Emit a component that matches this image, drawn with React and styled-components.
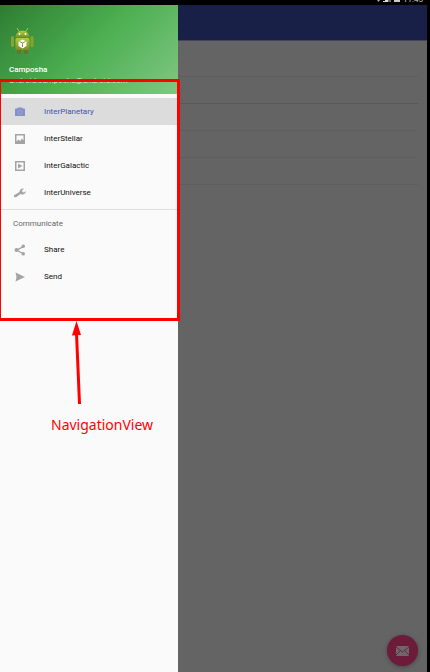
import React from "react";
import styled, { createGlobalStyle } from "styled-components";

const GlobalStyle = createGlobalStyle`
  * { box-sizing: border-box; }
  html, body, #root { height: 100%; margin: 0; }
  body { background: #000; font-family: Roboto, "Liberation Sans", sans-serif; }
`;

const Device = styled.div`
  position: relative;
  display: flex;
  flex-direction: column;
  min-height: 100vh;
  overflow: hidden;
  background: #000;
`;

const StatusBar = styled.header`
  height: 5px;
  flex: none;
  display: flex;
  justify-content: flex-end;
  gap: 3px;
  padding-right: 7px;
  overflow: hidden;
  color: #d0d0d0;
`;

const StatusIcons = styled.svg`
  width: 24px;
  height: 3px;
  flex: none;
`;

const Clock = styled.time`
  height: 3px;
  display: flex;
  align-items: flex-end;
  font-size: 8px;
  line-height: 7px;
`;

const Screen = styled.div`
  position: relative;
  flex: 1;
  display: flex;
  flex-direction: column;
  margin-right: 3px;
  background: #646464;
`;

const AppBar = styled.div`
  height: 36px;
  flex: none;
  background: #192048;
  border-bottom: 1px solid #42455a;
`;

const List = styled.ul`
  list-style: none;
  margin: 0 9px 0 0;
  padding: 9px 0 0;
`;

const ListRow = styled.li`
  height: 27px;
  border-bottom: 1px solid ${(p) => (p.$strong ? "#585858" : "#5e5e5e")};
`;

const Fab = styled.button`
  position: absolute;
  right: 9px;
  bottom: 6px;
  width: 31px;
  height: 31px;
  padding: 0;
  border: 0;
  border-radius: 50%;
  display: grid;
  place-items: center;
  background: #6c1b39;
  box-shadow: 0 1px 4px rgba(0, 0, 0, 0.3);
`;

const Drawer = styled.aside`
  position: absolute;
  top: 0;
  bottom: 0;
  left: 0;
  width: 178px;
  background: #fafafa;
`;

const Profile = styled.div`
  height: 89px;
  display: flex;
  flex-direction: column;
  padding: 22px 9px 0;
  color: #fff;
  background: linear-gradient(135deg, #2e7d32, #4caf50 50%, #81c784);
`;

const Avatar = styled.svg`
  width: 26px;
  height: 30px;
  margin-bottom: 7px;
`;

const Name = styled.div`
  font-size: 8px;
  line-height: 11px;
  font-weight: 500;
`;

const Email = styled.div`
  font-size: 8px;
  line-height: 11px;
  color: #d9eed9;
`;

const Menu = styled.nav`
  display: flex;
  flex-direction: column;
  padding-top: 4px;
`;

const MenuLink = styled.a`
  height: 27px;
  display: flex;
  align-items: center;
  gap: 18px;
  padding-left: 14px;
  font-size: 8px;
  font-weight: 400;
  text-decoration: none;
  color: ${(p) => (p.$active ? "#3f51b5" : "#111")};
  background: ${(p) => (p.$active ? "#dcdcdc" : "transparent")};
`;

const Glyph = styled.svg`
  width: 12px;
  height: 12px;
  flex: none;
  fill: ${(p) => (p.$active ? "#858fcb" : "#a4a4a4")};
`;

const Divider = styled.hr`
  width: 100%;
  height: 1px;
  margin: 3px 0 0;
  border: 0;
  background: #e0e0e0;
`;

const Subheader = styled.h2`
  height: 26px;
  margin: 0;
  padding-left: 13px;
  font-size: 8px;
  line-height: 27px;
  font-weight: 400;
  color: #666;
`;

const Highlight = styled.div`
  position: absolute;
  top: 74px;
  left: 0;
  width: 180px;
  height: 242px;
  border: 3px solid #f00;
  border-left-width: 1px;
  pointer-events: none;
`;

const Callout = styled.figure`
  position: absolute;
  top: 316px;
  left: 51px;
  margin: 0;
`;

const Arrow = styled.svg`
  display: block;
  width: 60px;
  height: 84px;
`;

const CalloutLabel = styled.figcaption`
  margin-top: 10px;
  font-family: "Noto Sans", "Open Sans", sans-serif;
  font-size: 14px;
  line-height: 20px;
  color: #f00;
`;

const glyphs = {
  camera: (
    <>
      <path d="M8 3 6.500 5H3q-1 0-1 1v13q0 1 1 1h18q1 0 1-1V6q0-1-1-1h-3.500L16 3z" />
      <circle cx="12" cy="12.500" r="4" fill="none" stroke="#a3aad0" strokeWidth="1.500" />
    </>
  ),
  image: (
    <path fillRule="evenodd" d="M2 2h20v20H2zM5 5v12l4-4 3 3 4-5 3 4V5z" />
  ),
  slideshow: (
    <path fillRule="evenodd" d="M2 2h20v20H2zM5 5v14h14V5zM8 7l9 5-9 5z" />
  ),
  wrench: (
    <path d="M1 16 11 10c0-5 4-8 9-7l-4 4 1 3 3 1 4-3c0 5-5 8-9 7l-2-1-8 6c-4 2-7-1-4-4z" />
  ),
  share: (
    <>
      <path d="m5 11 13-7 1 2.500-11 6 11 5.500-1 2.500-13-7z" />
      <circle cx="5" cy="12" r="4" />
      <circle cx="18.500" cy="4.500" r="3.500" />
      <circle cx="18.500" cy="19.500" r="3.500" />
    </>
  ),
  send: <path d="m3 3 19 9-19 9 2-9z" />,
};

const places = [
  { icon: "camera", label: "InterPlanetary", active: true },
  { icon: "image", label: "InterStellar" },
  { icon: "slideshow", label: "InterGalactic" },
  { icon: "wrench", label: "InterUniverse" },
];

const actions = [
  { icon: "share", label: "Share" },
  { icon: "send", label: "Send" },
];

function MenuItem({ icon, label, active }) {
  return (
    <MenuLink href="#" $active={active} aria-current={active ? "page" : undefined}>
      <Glyph viewBox="0 0 24 24" $active={active} aria-hidden="true">
        {glyphs[icon]}
      </Glyph>
      {label}
    </MenuLink>
  );
}

function Robot() {
  return (
    <Avatar viewBox="0 0 26 30" aria-hidden="true">
      <defs>
        <linearGradient id="shell" x1="0" y1="0" x2="0" y2="1">
          <stop offset="0" stopColor="#b4cd36" />
          <stop offset="1" stopColor="#788f24" />
        </linearGradient>
      </defs>
      <path d="m8 1 2.500 4M19 1l-2.500 4" stroke="#a5c547" strokeWidth="1" />
      <path d="M6.500 10.500c0-9 14-9 14 0z" fill="url(#shell)" />
      <circle cx="10.500" cy="7" r="1" fill="#fff" />
      <circle cx="16.500" cy="7" r="1" fill="#fff" />
      <rect x="2" y="9" width="3" height="11" rx="1.500" fill="#8aa32c" />
      <rect x="21.500" y="9" width="3" height="11" rx="1.500" fill="#8aa32c" />
      <rect x="8" y="21" width="4" height="6" rx="1.500" fill="#66752b" />
      <rect x="15" y="21" width="4" height="6" rx="1.500" fill="#66752b" />
      <rect x="6.500" y="11" width="14" height="12" rx="1.500" fill="url(#shell)" />
      <path d="m13.500 12.500 4 2v4.500l-4 2.500-4-2.500v-4.500z" fill="#fff" />
      <path d="m10.500 14.500 3 1.500 3-1.500M13.500 16v4" fill="none" stroke="#819a3b" strokeWidth="1" />
    </Avatar>
  );
}

export default function App() {
  return (
    <>
      <GlobalStyle />
      <Device>
        <StatusBar>
          <StatusIcons viewBox="0 0 24 3" aria-hidden="true">
            <path d="M1 0h3L2.500 2z" fill="#aaa" />
            <path d="M7 1h2V0h3v2H7z" fill="#ddd" />
            <path d="M12 0h3v2h-3z" fill="#666" />
            <path d="M18 0h6v2h-6z" fill="#ccc" />
          </StatusIcons>
          <Clock>11:45</Clock>
        </StatusBar>
        <Screen>
          <AppBar />
          <List>
            <ListRow />
            <ListRow $strong />
            <ListRow />
            <ListRow />
            <ListRow />
          </List>
          <Fab aria-label="Compose mail">
            <svg width="13" height="10" viewBox="0 0 13 10" aria-hidden="true">
              <rect width="13" height="10" rx="1" fill="#6c686a" />
              <path
                d="m0 1 6.500 5L13 1M0 9l4.500-4.500M13 9 8.500 4.500"
                fill="none"
                stroke="#6c2541"
                strokeWidth="1"
              />
            </svg>
          </Fab>
          <Drawer>
            <Profile>
              <Robot />
              <Name>Camposha</Name>
              <Email>android.camposha@android.com</Email>
            </Profile>
            <Menu aria-label="Main">
              {places.map((item) => (
                <MenuItem key={item.label} {...item} />
              ))}
              <Divider />
              <Subheader>Communicate</Subheader>
              {actions.map((item) => (
                <MenuItem key={item.label} {...item} />
              ))}
            </Menu>
            <Highlight />
            <Callout>
              <Arrow viewBox="0 0 60 84" aria-hidden="true">
                <path d="m25.500 12 3 71" stroke="#f00" strokeWidth="3" />
                <path d="m25.500 0 4.500 14-9 .5z" fill="#f00" />
              </Arrow>
              <CalloutLabel>NavigationView</CalloutLabel>
            </Callout>
          </Drawer>
        </Screen>
      </Device>
    </>
  );
}
